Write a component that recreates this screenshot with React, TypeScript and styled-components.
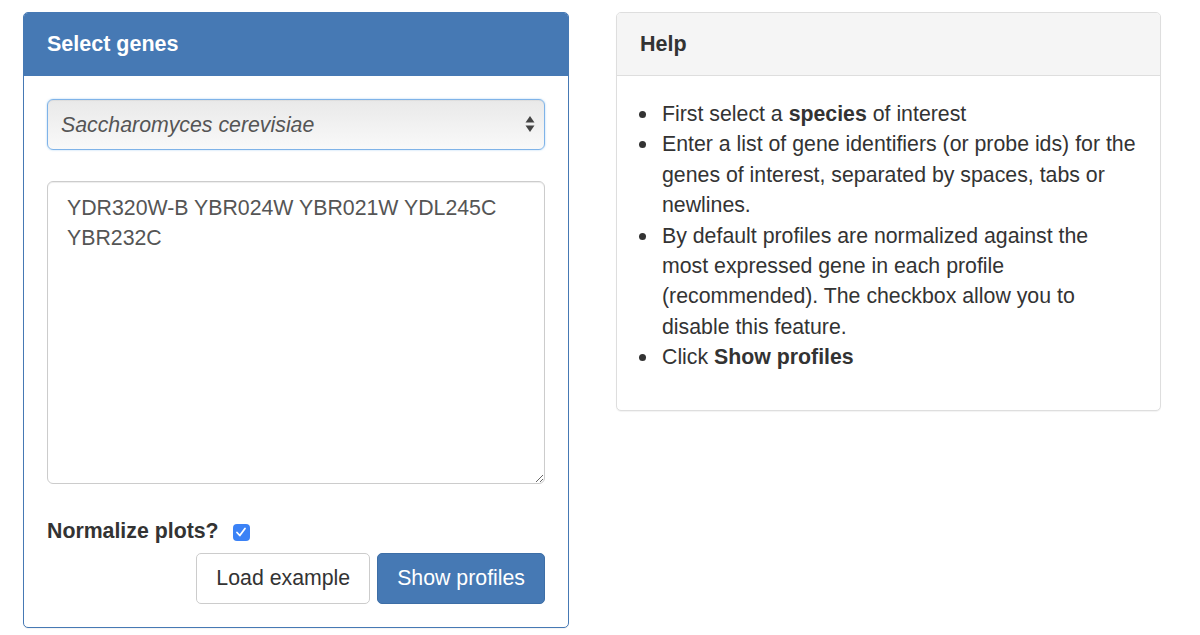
import React, { useState } from "react";
import styled, { createGlobalStyle } from "styled-components";

const GlobalStyle = createGlobalStyle`
    body {
        margin: 0;
        background: #fff;
        font-family: "Liberation Sans", Arial, sans-serif;
        color: #333;
    }
`;

const Page = styled.div`
    display: grid;
    grid-template-columns: 546px 545px;
    column-gap: 47px;
    align-items: start;
    padding: 12px 23px;
`;

const Panel = styled.section<{ $primary?: boolean }>`
    border: 1px solid ${(p) => (p.$primary ? "#4679b4" : "#dedede")};
    border-radius: 5px;
    background: #fff;
    box-shadow: 0 1px 1px rgba(0, 0, 0, 0.05);
    overflow: hidden;
`;

const PanelHeading = styled.div<{ $primary?: boolean }>`
    padding: 19px 23px 18px;
    font-size: 21.5px;
    font-weight: bold;
    line-height: 25px;
    background: ${(p) => (p.$primary ? "#4679b4" : "#f5f5f5")};
    color: ${(p) => (p.$primary ? "#fff" : "#333")};
    border-bottom: 1px solid ${(p) => (p.$primary ? "#4679b4" : "#dedede")};
`;

const PanelBody = styled.div`
    padding: 23px 23px 23px;
    display: flex;
    flex-direction: column;
`;

const SelectWrap = styled.div`
    position: relative;
`;

const SpeciesSelect = styled.select`
    appearance: none;
    width: 100%;
    height: 51px;
    padding: 0 40px 0 13px;
    font-family: "Liberation Sans", Arial, sans-serif;
    font-size: 21.3px;
    font-style: italic;
    color: #555;
    border: 1px solid #7fb3e8;
    border-radius: 6px;
    background: linear-gradient(#e9e9e9, #f9f9f9);
    box-shadow: 0 0 2px rgba(102, 175, 233, 0.6), inset 0 1px 1px rgba(0, 0, 0, 0.05);
    outline: none;
`;

const Arrows = styled.svg`
    position: absolute;
    right: 10px;
    top: 16px;
    pointer-events: none;
`;

const GeneBox = styled.textarea`
    margin-top: 31px;
    height: 303px;
    box-sizing: border-box;
    padding: 11px 19px;
    font-family: "Liberation Sans", Arial, sans-serif;
    font-size: 21.3px;
    line-height: 30px;
    color: #555;
    border: 1px solid #ccc;
    border-radius: 6px;
    box-shadow: inset 0 1px 1px rgba(0, 0, 0, 0.075);
    outline: none;
`;

const CheckRow = styled.label`
    display: flex;
    align-items: center;
    gap: 14px;
    margin-top: 32px;
    font-size: 21.3px;
    font-weight: bold;
    line-height: 30px;
    color: #333;
`;

const CheckBox = styled.span<{ $on: boolean }>`
    width: 17px;
    height: 17px;
    border-radius: 4px;
    background: ${(p) => (p.$on ? "#3b82f6" : "#fff")};
    border: ${(p) => (p.$on ? "none" : "1px solid #999")};
    display: inline-flex;
    align-items: center;
    justify-content: center;
    margin-top: 2px;
`;

const ButtonRow = styled.div`
    display: flex;
    justify-content: flex-end;
    gap: 7px;
    margin-top: 7px;
`;

const Button = styled.button<{ $primary?: boolean }>`
    height: 51px;
    padding: 0 19px;
    font-family: "Liberation Sans", Arial, sans-serif;
    font-size: 21.3px;
    border-radius: 5px;
    border: 1px solid ${(p) => (p.$primary ? "#3d6ea6" : "#ccc")};
    background: ${(p) => (p.$primary ? "#4679b4" : "#fff")};
    color: ${(p) => (p.$primary ? "#fff" : "#333")};
    cursor: pointer;
`;

const HelpList = styled.ul`
    margin: 0 0 14px;
    padding-left: 22px;
    list-style: none;
    font-size: 21.3px;
    line-height: 30.4px;
    color: #333;
`;

const HelpItem = styled.li`
    position: relative;

    &::before {
        content: "";
        position: absolute;
        left: -23px;
        top: 12px;
        width: 7px;
        height: 7px;
        border-radius: 50%;
        background: #333;
    }
`;

const App: React.FC = () => {
    const [normalize, setNormalize] = useState(true);

    return (
        <>
            <GlobalStyle />
            <Page>
                <Panel $primary>
                    <PanelHeading $primary>Select genes</PanelHeading>
                    <PanelBody>
                        <SelectWrap>
                            <SpeciesSelect defaultValue="sc">
                                <option value="sc">Saccharomyces cerevisiae</option>
                            </SpeciesSelect>
                            <Arrows width="10" height="18" viewBox="0 0 10 18">
                                <path d="M5 1 L9.5 7.5 H0.5 Z" fill="#444" />
                                <path d="M5 17 L9.5 10.5 H0.5 Z" fill="#444" />
                            </Arrows>
                        </SelectWrap>
                        <GeneBox
                            defaultValue="YDR320W-B YBR024W YBR021W YDL245C YBR232C"
                            spellCheck={false}
                        />
                        <CheckRow onClick={() => setNormalize(!normalize)}>
                            Normalize plots?
                            <CheckBox $on={normalize}>
                                {normalize && (
                                    <svg width="12" height="12" viewBox="0 0 12 12">
                                        <path
                                            d="M2 6.5 L4.8 9.5 L10 2.5"
                                            fill="none"
                                            stroke="#fff"
                                            strokeWidth="1.8"
                                            strokeLinecap="round"
                                            strokeLinejoin="round"
                                        />
                                    </svg>
                                )}
                            </CheckBox>
                        </CheckRow>
                        <ButtonRow>
                            <Button>Load example</Button>
                            <Button $primary>Show profiles</Button>
                        </ButtonRow>
                    </PanelBody>
                </Panel>

                <Panel>
                    <PanelHeading>Help</PanelHeading>
                    <PanelBody>
                        <HelpList>
                            <HelpItem>First select a <b>species</b> of interest</HelpItem>
                            <HelpItem>
                                Enter a list of gene identifiers (or probe ids) for the genes of
                                interest, separated by spaces, tabs or newlines.
                            </HelpItem>
                            <HelpItem>
                                By default profiles are normalized against the most expressed gene
                                in each profile (recommended). The checkbox allow you to disable
                                this feature.
                            </HelpItem>
                            <HelpItem>Click <b>Show profiles</b></HelpItem>
                        </HelpList>
                    </PanelBody>
                </Panel>
            </Page>
        </>
    );
};

export default App;
